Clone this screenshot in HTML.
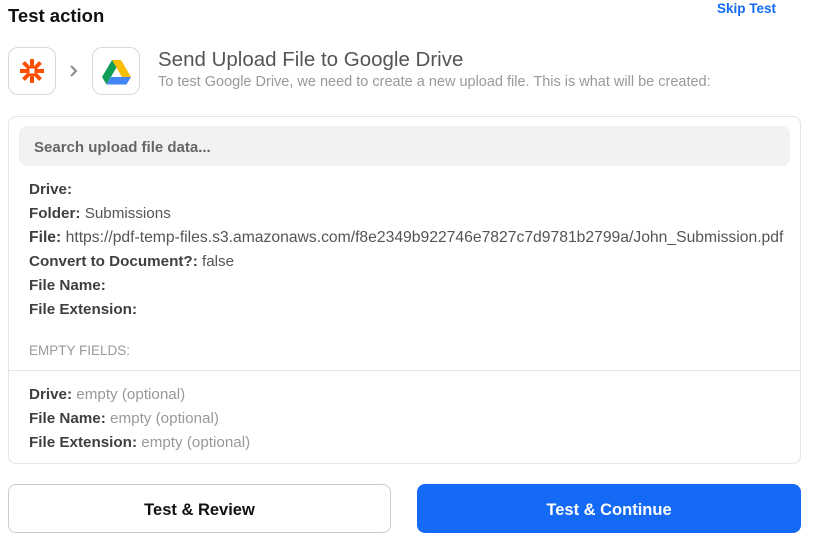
<!DOCTYPE html><html><head><style>
body{margin:0;width:816px;height:541px;background:#fff;font-family:"Liberation Sans",sans-serif;position:relative;overflow:hidden;color:#403f3e}
.a{position:absolute;white-space:nowrap}
.ib{position:absolute;top:47px;width:46px;height:46px;border:1px solid #d9d9d9;border-radius:10px;background:#fff}
.row{position:absolute;left:29px;font-size:15.2px;color:#555}
.row b{color:#403f3e}
.e{color:#999}
.btn{position:absolute;top:484px;height:49px;border-radius:8px;font-weight:bold;font-size:16.5px;display:flex;align-items:center;justify-content:center;box-sizing:border-box;padding-top:3px}
</style></head><body>
<div class="a" style="left:8px;top:5px;font-size:18.5px;font-weight:bold;color:#111">Test action</div>
<div class="a" style="left:717px;top:1px;font-size:13.5px;font-weight:bold;color:#136bf5">Skip Test</div>
<div class="ib" style="left:8px"><svg width="46" height="46" viewBox="0 0 46 46"><g stroke="#ff4f00" stroke-width="4"><line x1="23" y1="11" x2="23" y2="35"/><line x1="11" y1="23" x2="35" y2="23"/><line x1="14.5" y1="14.5" x2="31.5" y2="31.5"/><line x1="31.5" y1="14.5" x2="14.5" y2="31.5"/></g><rect x="20.5" y="20.5" width="5" height="5" fill="#fff"/></svg></div>
<svg class="a" style="left:69px;top:64px" width="10" height="14"><path d="M2 2l5 5-5 5" stroke="#888" stroke-width="2" fill="none"/></svg>
<div class="ib" style="left:92px"><svg width="46" height="46" viewBox="0 0 46 46"><path d="M19 12h9l10 17h-9z" fill="#fbbc04"/><path d="M19 12l-10 17 4.5 7.5 10-17z" fill="#0f9d58"/><path d="M13.5 36.5h20l4.5-7.5h-20z" fill="#4285f4"/></svg></div>
<div class="a" style="left:158px;top:48px;font-size:20.5px;color:#555">Send Upload File to Google Drive</div>
<div class="a" style="left:158px;top:74px;font-size:14.5px;color:#999">To test Google Drive, we need to create a new upload file. This is what will be created:</div>
<div class="a" style="left:8px;top:116px;width:791px;height:346px;border:1px solid #e5e5e5;border-radius:8px"></div>
<div class="a" style="left:19px;top:126px;width:771px;height:40px;background:#f2f2f2;border-radius:8px"></div>
<div class="a" style="left:34px;top:139px;font-size:15px;color:#666;font-weight:bold">Search upload file data...</div>
<div class="row" style="top:181px"><b>Drive:</b></div>
<div class="row" style="top:205px"><b>Folder:</b> Submissions</div>
<div class="row" style="top:229px;font-size:15.7px"><b>File:</b> https://pdf-temp-files.s3.amazonaws.com/f8e2349b922746e7827c7d9781b2799a/John_Submission.pdf</div>
<div class="row" style="top:253px"><b>Convert to Document?:</b> false</div>
<div class="row" style="top:277px"><b>File Name:</b></div>
<div class="row" style="top:301px"><b>File Extension:</b></div>
<div class="row" style="top:343px;font-size:13.5px;color:#999">EMPTY FIELDS:</div>
<div class="a" style="left:9px;top:370px;width:791px;height:1px;background:#e5e5e5"></div>
<div class="row" style="top:386px"><b>Drive:</b> <span class="e">empty (optional)</span></div>
<div class="row" style="top:410px"><b>File Name:</b> <span class="e">empty (optional)</span></div>
<div class="row" style="top:434px"><b>File Extension:</b> <span class="e">empty (optional)</span></div>
<div class="btn" style="left:8px;width:383px;border:1px solid #ccc;color:#111">Test &amp; Review</div>
<div class="btn" style="left:417px;width:384px;background:#1469f5;color:#fff">Test &amp; Continue</div>
</body></html>
